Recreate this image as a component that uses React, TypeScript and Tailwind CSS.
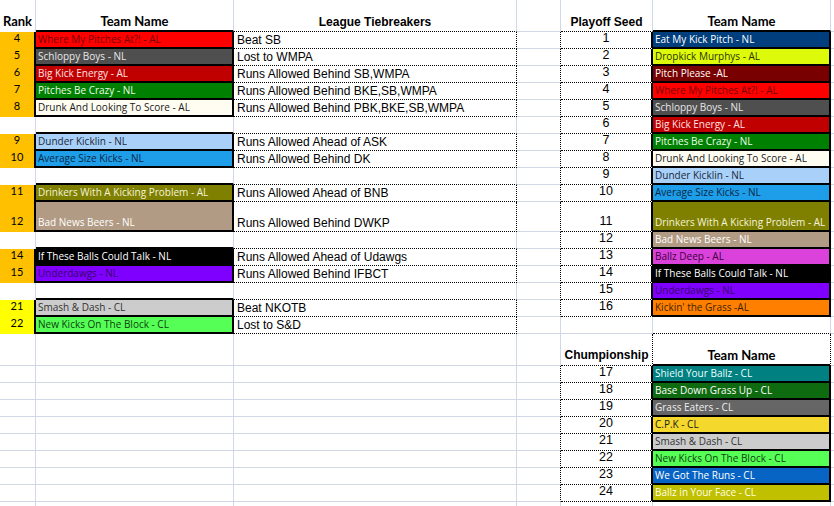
import React from "react";

type BT = "g" | "d" | "t" | "n";
type Kind = "rank" | "team" | "tb" | "seed" | "hL" | "hLr" | "hA" | "hA3";
type Cell = { t?: string; bg?: string; fg?: string; r: BT; b: BT; k?: Kind };
type Row = { h: string; cells: Cell[] };

const RB: Record<BT, string> = {
  g: "[border-right:1px_solid_#d0d7e5]",
  d: "[border-right:1px_dotted_#000]",
  t: "[border-right:2px_solid_#000]",
  n: "",
};
const BB: Record<BT, string> = {
  g: "[border-bottom:1px_solid_#d0d7e5]",
  d: "[border-bottom:1px_dotted_#000]",
  t: "[border-bottom:2px_solid_#000]",
  n: "",
};
const K: Record<Kind, string> = {
  rank: "justify-center font-['Lato',sans-serif] text-[11px] leading-[13px] pb-[5px] text-black",
  team: "justify-start pl-[2px] font-['Open_Sans',sans-serif] text-[10px] leading-[13px] pb-[1px] whitespace-nowrap",
  tb: "justify-start pl-[3px] font-['Liberation_Sans',Arial,sans-serif] text-[12px] leading-[14px] pb-[1px] text-black whitespace-nowrap",
  seed: "justify-center font-['Liberation_Sans',Arial,sans-serif] text-[12.5px] leading-[14px] pb-[3px] text-black",
  hL: "justify-center font-['Lato',sans-serif] font-bold text-[13px] leading-[16px] pb-[1px] text-black whitespace-nowrap",
  hLr: "justify-center font-['Lato',sans-serif] font-bold text-[13px] leading-[16px] pb-[3px] text-black whitespace-nowrap",
  hA: "justify-center font-['Liberation_Sans',Arial,sans-serif] font-bold text-[12px] leading-[14px] pb-[2px] text-black whitespace-nowrap",
  hA3: "justify-center font-['Liberation_Sans',Arial,sans-serif] font-bold text-[12px] leading-[14px] pb-[3px] text-black whitespace-nowrap",
};
const W = ["w-[36px]", "w-[198px]", "w-[283px]", "w-[44px]", "w-[92px]", "w-[178px]", "flex-1"];

type Team = { name: string; bg: string; fg: string };
const T: Record<string, Team> = {
  wmpa: { name: "Where My Pitches At?! - AL", bg: "bg-[#ff0000]", fg: "text-[#7a0000]" },
  sb: { name: "Schloppy Boys - NL", bg: "bg-[#4f4f4f]", fg: "text-[#e8e8e8]" },
  bke: { name: "Big Kick Energy - AL", bg: "bg-[#c00000]", fg: "text-[#ffe0e0]" },
  pbc: { name: "Pitches Be Crazy - NL", bg: "bg-[#008000]", fg: "text-[#eaffea]" },
  dalts: { name: "Drunk And Looking To Score - AL", bg: "bg-[#fffdf2]", fg: "text-[#1a1a1a]" },
  dk: { name: "Dunder Kicklin - NL", bg: "bg-[#a8d0f8]", fg: "text-[#1a2838]" },
  ask: { name: "Average Size Kicks - NL", bg: "bg-[#1e9de8]", fg: "text-[#0a2744]" },
  dwkp: { name: "Drinkers With A Kicking Problem - AL", bg: "bg-[#808000]", fg: "text-[#f4f4dc]" },
  bnb: { name: "Bad News Beers - NL", bg: "bg-[#b19b84]", fg: "text-[#ffffff]" },
  itbct: { name: "If These Balls Could Talk - NL", bg: "bg-[#000000]", fg: "text-[#ffffff]" },
  ud: { name: "Underdawgs - NL", bg: "bg-[#8000ff]", fg: "text-[#36006a]" },
  sd: { name: "Smash & Dash - CL", bg: "bg-[#cccccc]", fg: "text-[#333333]" },
  nkotb: { name: "New Kicks On The Block - CL", bg: "bg-[#55ff55]", fg: "text-[#103f10]" },
  emkp: { name: "Eat My Kick Pitch - NL", bg: "bg-[#003e7e]", fg: "text-[#ffffff]" },
  dm: { name: "Dropkick Murphys - AL", bg: "bg-[#dcfa0a]", fg: "text-[#2e3300]" },
  pp: { name: "Pitch Please -AL", bg: "bg-[#780000]", fg: "text-[#ffffff]" },
  bd: { name: "Ballz Deep - AL", bg: "bg-[#db42db]", fg: "text-[#3d003d]" },
  ktg: { name: "Kickin' the Grass -AL", bg: "bg-[#ff8000]", fg: "text-[#3d1f00]" },
  syb: { name: "Shield Your Ballz - CL", bg: "bg-[#008080]", fg: "text-[#eaffff]" },
  bdgu: { name: "Base Down Grass Up - CL", bg: "bg-[#0f6b0f]", fg: "text-[#ffffff]" },
  ge: { name: "Grass Eaters - CL", bg: "bg-[#666666]", fg: "text-[#eeeeee]" },
  cpk: { name: "C.P.K - CL", bg: "bg-[#f5d82c]", fg: "text-[#222222]" },
  wgtr: { name: "We Got The Runs - CL", bg: "bg-[#0764c4]", fg: "text-[#ffffff]" },
  biyf: { name: "Ballz in Your Face - CL", bg: "bg-[#c0c000]", fg: "text-[#ffffe4]" },
};

const ORANGE = "bg-[#ffc000]";
const YELLOW = "bg-[#ffff00]";

const rank = (n: string, bg: string): Cell => ({ t: n, bg, r: "t", b: "n", k: "rank" });
const team = (id: string): Cell => ({ t: T[id].name, bg: T[id].bg, fg: T[id].fg, r: "t", b: "t", k: "team" });
const tb = (t: string): Cell => ({ t, r: "d", b: "d", k: "tb" });
const seed = (n: string): Cell => ({ t: n, r: "t", b: "d", k: "seed" });
const dD: Cell = { r: "d", b: "g" };
const gg: Cell = { r: "g", b: "g" };
const G: Cell = { r: "n", b: "g" };
const blankL: Cell[] = [
  { r: "g", b: "n" },
  { r: "g", b: "t" },
  { r: "g", b: "d" },
];
const emptyL: Cell[] = [gg, gg, gg];

const H17 = "h-[17px]";

const rows: Row[] = [
  {
    h: "h-[32px]",
    cells: [
      { t: "Rank", r: "g", b: "n", k: "hLr" },
      { t: "Team Name", r: "g", b: "t", k: "hL" },
      { t: "League Tiebreakers", r: "g", b: "d", k: "hA" },
      gg,
      { t: "Playoff Seed", r: "g", b: "d", k: "hA" },
      { t: "Team Name", r: "g", b: "t", k: "hL" },
      G,
    ],
  },
  { h: H17, cells: [rank("4", ORANGE), team("wmpa"), tb("Beat SB"), dD, seed("1"), team("emkp"), G] },
  { h: H17, cells: [rank("5", ORANGE), team("sb"), tb("Lost to WMPA"), dD, seed("2"), team("dm"), G] },
  { h: H17, cells: [rank("6", ORANGE), team("bke"), tb("Runs Allowed Behind SB,WMPA"), dD, seed("3"), team("pp"), G] },
  { h: H17, cells: [rank("7", ORANGE), team("pbc"), tb("Runs Allowed Behind BKE,SB,WMPA"), dD, seed("4"), team("wmpa"), G] },
  { h: H17, cells: [rank("8", ORANGE), team("dalts"), tb("Runs Allowed Behind PBK,BKE,SB,WMPA"), dD, seed("5"), team("sb"), G] },
  { h: H17, cells: [...blankL, dD, seed("6"), team("bke"), G] },
  { h: H17, cells: [rank("9", ORANGE), team("dk"), tb("Runs Allowed Ahead of ASK"), dD, seed("7"), team("pbc"), G] },
  { h: H17, cells: [rank("10", ORANGE), team("ask"), tb("Runs Allowed Behind DK"), dD, seed("8"), team("dalts"), G] },
  { h: H17, cells: [...blankL, dD, seed("9"), team("dk"), G] },
  { h: H17, cells: [rank("11", ORANGE), team("dwkp"), tb("Runs Allowed Ahead of BNB"), dD, seed("10"), team("ask"), G] },
  { h: "h-[30px]", cells: [rank("12", ORANGE), team("bnb"), tb("Runs Allowed Behind DWKP"), dD, seed("11"), team("dwkp"), G] },
  { h: H17, cells: [...blankL, dD, seed("12"), team("bnb"), G] },
  { h: H17, cells: [rank("14", ORANGE), team("itbct"), tb("Runs Allowed Ahead of Udawgs"), dD, seed("13"), team("bd"), G] },
  { h: H17, cells: [rank("15", ORANGE), team("ud"), tb("Runs Allowed Behind IFBCT"), dD, seed("14"), team("itbct"), G] },
  { h: H17, cells: [...blankL, dD, seed("15"), team("ud"), G] },
  { h: H17, cells: [rank("21", YELLOW), team("sd"), tb("Beat NKOTB"), dD, seed("16"), team("ktg"), G] },
  { h: H17, cells: [rank("22", YELLOW), team("nkotb"), tb("Lost to S&D"), gg, gg, { r: "g", b: "d" }, G] },
  {
    h: "h-[32px]",
    cells: [
      ...emptyL,
      gg,
      { t: "Chumpionship", r: "d", b: "d", k: "hA3" },
      { t: "Team Name", r: "d", b: "t", k: "hL" },
      G,
    ],
  },
  { h: H17, cells: [...emptyL, dD, seed("17"), team("syb"), G] },
  { h: H17, cells: [...emptyL, dD, seed("18"), team("bdgu"), G] },
  { h: H17, cells: [...emptyL, dD, seed("19"), team("ge"), G] },
  { h: H17, cells: [...emptyL, dD, seed("20"), team("cpk"), G] },
  { h: H17, cells: [...emptyL, dD, seed("21"), team("sd"), G] },
  { h: H17, cells: [...emptyL, dD, seed("22"), team("nkotb"), G] },
  { h: H17, cells: [...emptyL, dD, seed("23"), team("wgtr"), G] },
  { h: H17, cells: [...emptyL, dD, seed("24"), team("biyf"), G] },
  { h: H17, cells: [...emptyL, gg, gg, gg, G] },
];

export default function App() {
  return (
    <div className="w-[834px] h-[506px] overflow-hidden bg-white">
      {rows.map((row, i) => (
        <div key={i} className={`flex ${row.h}`}>
          {row.cells.map((c, j) => (
            <div
              key={j}
              className={`flex items-end shrink-0 ${W[j]} ${c.bg ?? ""} ${c.fg ?? ""} ${RB[c.r]} ${BB[c.b]} ${c.k ? K[c.k] : ""}`}
            >
              {c.t}
            </div>
          ))}
        </div>
      ))}
    </div>
  );
}
